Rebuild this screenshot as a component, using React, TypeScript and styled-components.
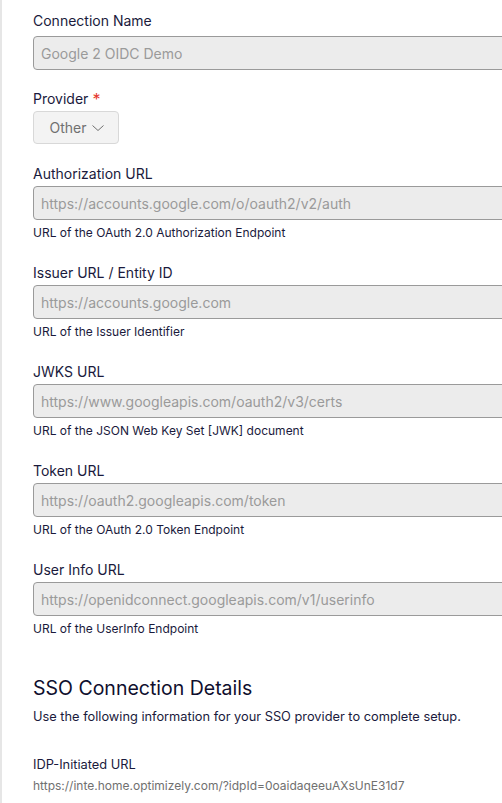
import React from "react";
import styled, { createGlobalStyle } from "styled-components";

const Global = createGlobalStyle`
  html, body { margin: 0; padding: 0; background: #fff; overflow: hidden; }
  body { font-family: Inter, "Noto Sans", sans-serif; color: #1a1a3c; }
`;

const Page = styled.div`
  border-left: 2px solid #e6e6e6;
  min-height: 803px;
  box-sizing: border-box;
  padding: 11px 0 0 31px;
  width: 560px;
`;

const Field = styled.div<{ $gap: number }>`
  display: flex;
  flex-direction: column;
  margin-bottom: ${(p) => p.$gap}px;
`;

const Label = styled.label<{ $mb: number }>`
  font-size: 14px;
  line-height: 20px;
  color: #1a1a3c;
  margin-bottom: ${(p) => p.$mb}px;
  display: flex;
  align-items: center;
  gap: 4px;
`;

const Required = styled.span`
  color: #e5362c;
  font-size: 16px;
  line-height: 14px;
`;

const Input = styled.div`
  box-sizing: border-box;
  height: 34px;
  width: 520px;
  border: 1px solid #9a9a9a;
  border-radius: 4px;
  background: #ececec;
  padding: 0 7px;
  display: flex;
  align-items: center;
  font-size: 14px;
  color: #9a9a9a;
  white-space: nowrap;
`;

const Help = styled.div`
  font-size: 12px;
  line-height: 16px;
  margin-top: 5px;
  color: #1a1a3c;
`;

const SelectButton = styled.button`
  box-sizing: border-box;
  width: 86px;
  height: 33px;
  border: 1px solid #d8d8d8;
  border-radius: 4px;
  background: #f3f3f3;
  display: flex;
  align-items: center;
  justify-content: center;
  gap: 4px;
  font-family: inherit;
  font-size: 14px;
  color: #707070;
  padding: 0 0 0 2px;
`;

const Heading = styled.h2`
  font-size: 19.5px;
  line-height: 28px;
  font-weight: 400;
  margin: 37px 0 5px;
  color: #0f0f2e;
`;

const Desc = styled.p`
  font-size: 12.8px;
  line-height: 20px;
  margin: 0 0 28px;
  color: #1a1a3c;
`;

const InfoLabel = styled.div`
  font-size: 12.8px;
  line-height: 20px;
  color: #1a1a3c;
`;

const InfoValue = styled.div`
  font-size: 12px;
  line-height: 18px;
  margin-top: 2px;
  color: #707070;
`;

const fields = [
  { label: "Authorization URL", value: "https://accounts.google.com/o/oauth2/v2/auth", help: "URL of the OAuth 2.0 Authorization Endpoint" },
  { label: "Issuer URL / Entity ID", value: "https://accounts.google.com", help: "URL of the Issuer Identifier" },
  { label: "JWKS URL", value: "https://www.googleapis.com/oauth2/v3/certs", help: "URL of the JSON Web Key Set [JWK] document" },
  { label: "Token URL", value: "https://oauth2.googleapis.com/token", help: "URL of the OAuth 2.0 Token Endpoint" },
  { label: "User Info URL", value: "https://openidconnect.googleapis.com/v1/userinfo", help: "URL of the UserInfo Endpoint" },
];

export default function App() {
  return (
    <>
      <Global />
      <Page>
        <Field $gap={19}>
          <Label $mb={5}>Connection Name</Label>
          <Input>Google 2 OIDC Demo</Input>
        </Field>
        <Field $gap={20}>
          <Label $mb={2}>
            Provider <Required>*</Required>
          </Label>
          <SelectButton>
            Other
            <svg width="14" height="10" viewBox="0 0 14 10" fill="none">
              <path d="M1.5 2.5 L7 7.5 L12.5 2.5" stroke="#707070" strokeWidth="1" />
            </svg>
          </SelectButton>
        </Field>
        {fields.map((f) => (
          <Field key={f.label} $gap={22}>
            <Label $mb={2}>{f.label}</Label>
            <Input>{f.value}</Input>
            <Help>{f.help}</Help>
          </Field>
        ))}
        <Heading>SSO Connection Details</Heading>
        <Desc>Use the following information for your SSO provider to complete setup.</Desc>
        <InfoLabel>IDP-Initiated URL</InfoLabel>
        <InfoValue>https://inte.home.optimizely.com/?idpId=0oaidaqeeuAXsUnE31d7</InfoValue>
      </Page>
    </>
  );
}
